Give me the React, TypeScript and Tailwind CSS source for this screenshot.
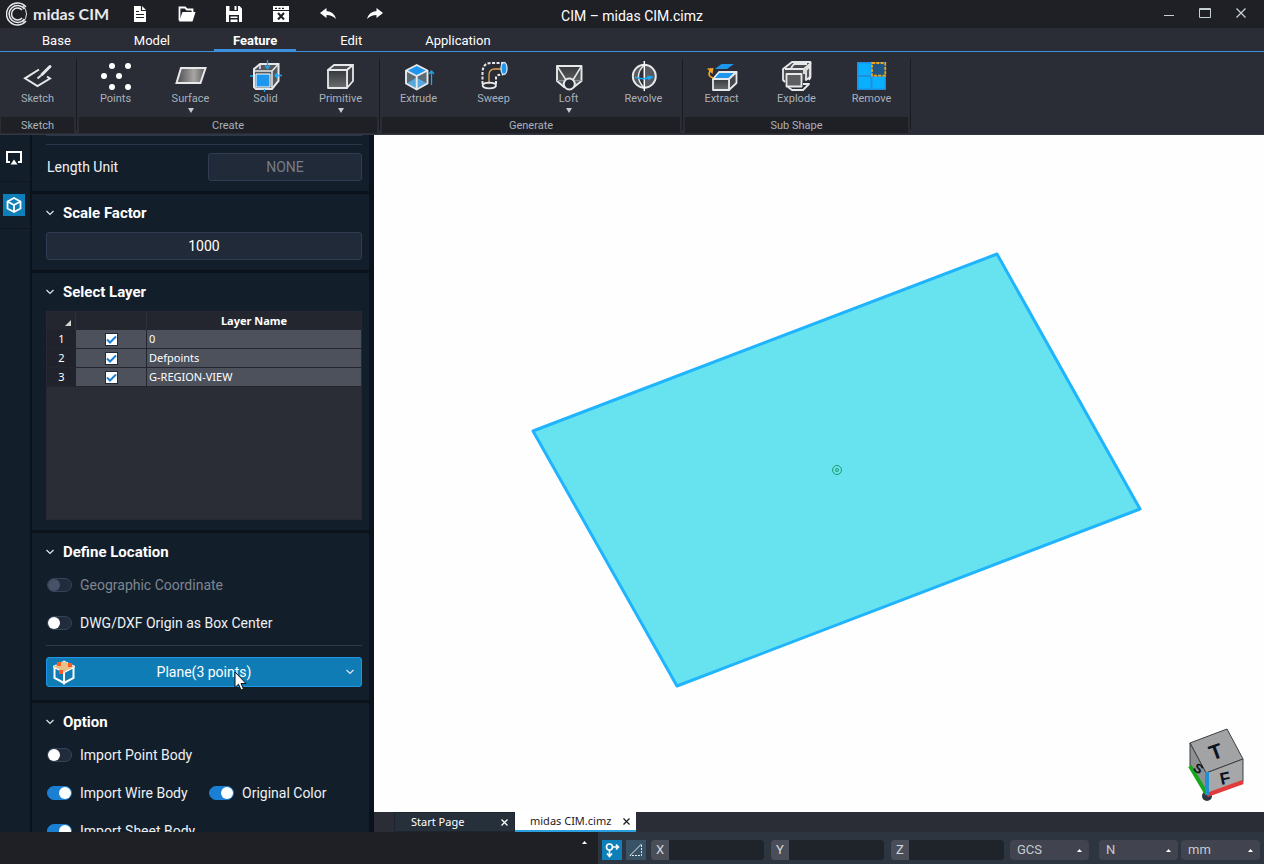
import React, { useState } from 'react'

interface ITool {
  label: string
  icon: React.ReactNode
  hasMenu?: boolean
}

interface IToolGroup {
  name: string
  tools: ITool[]
}

interface ILayer {
  id: number
  name: string
  visible: boolean
}

const LINE = '#e6e8ea'
const BLUE = '#1e96ee'

const SketchIcon = <g fill="none" stroke={LINE} strokeWidth="2">
  <path d="M17 9.5 3 18.3 15.5 26 28 18.5 25 16.5" />
  <path d="M20 14.5 28 6.5" strokeWidth="3" strokeLinecap="round" />
  <path d="M15.5 18.5 19 15.5" />
</g>

const PointsIcon = <g fill="#fff">
  <circle cx="12" cy="6" r="3" />
  <circle cx="28" cy="6" r="3" />
  <circle cx="4" cy="16" r="3" />
  <circle cx="19" cy="16" r="3" />
  <circle cx="12" cy="27" r="3" />
  <circle cx="28" cy="27" r="3" />
</g>

const SurfaceIcon = <path d="M6 8H30.5L25.5 23H1.5Z" fill="url(#metal)" stroke={LINE} strokeWidth="2" />

const SolidIcon = <g>
  <path d="M10 4H28.500V21L22 29H6L4 27V9Z" fill="#55585c" stroke={LINE} strokeWidth="2" />
  <path d="M5 11H22L28.500 4M22 11V28M10 4V9" fill="none" stroke={LINE} strokeWidth="1.500" />
  <path d="M6 14H20V27H6Z" fill={BLUE} stroke="#fff" />
  <path d="M17.500 0V8M15 5.500 17.500 8.500 20 5.500M32 15.500H25M27.500 13 25 15.500 27.500 18M0 16H3M14.500 29V32" fill="none" stroke="#18a8f5" strokeWidth="1.300" />
</g>

const PrimitiveIcon = <g stroke={LINE} strokeWidth="1.800" strokeLinejoin="round">
  <path d="M3 10 9 5H28L22 10Z" fill="#4c4e51" />
  <path d="M22 10 28 5V21L22 28Z" fill="#3c3e41" />
  <path d="M3 10H22V28H3Z" fill="url(#shade)" />
</g>

const ExtrudeIcon = <g strokeLinejoin="round">
  <path d="M13.700 5 24.500 10.500V23.500L13.700 29.500 3 23.500V10.500Z" fill="#5c6b76" />
  <path d="M13.700 17.500 24 23.500 13.700 29 3.500 23.500Z" fill="#57a8dc" />
  <path d="M13.700 5 24.500 10.500 13.700 16 3 10.500Z" fill={BLUE} />
  <path d="M13.700 5 24.500 10.500V23.500L13.700 29.500 3 23.500V10.500ZM3 10.500 13.700 16 24.500 10.500M13.700 16V29" fill="none" stroke={LINE} strokeWidth="1.900" />
  <path d="M28.500 25V11.500M26 14 28.500 11 31 14" fill="none" stroke="#18a8f5" strokeWidth="1.300" />
</g>

const SweepIcon = <g fill="none">
  <path d="M4.500 24V12Q5 3 13 3H25" stroke={LINE} strokeWidth="2" strokeDasharray="3 1.500" />
  <path d="M18 24V18Q18 14.500 25 14.500" stroke={LINE} strokeWidth="2" strokeDasharray="3 1.500" />
  <path d="M11 24V15Q11 9 17 9H25" stroke="#e0a64e" strokeWidth="1.300" />
  <ellipse cx="26" cy="8.500" rx="3" ry="6" fill={BLUE} stroke="#d7e9f6" strokeWidth="1.300" />
  <ellipse cx="11.300" cy="25.500" rx="6.700" ry="2.800" stroke={LINE} strokeWidth="1.800" />
</g>

const LoftIcon = <g stroke={LINE} strokeWidth="1.900" strokeLinejoin="round">
  <path d="M4 6H28.500V21L21 27H11L4 21Z" fill="url(#shade)" />
  <path d="M4 6 13 20M28.500 6 20 20" fill="none" strokeWidth="1.500" />
  <path d="M4 20.500H11M21 20.500H28.500" fill="none" stroke="#8a8d91" strokeWidth="1" />
  <circle cx="16.300" cy="24" r="5.500" fill="#2a2c36" />
</g>

const RevolveIcon = <g fill="none">
  <circle cx="16.300" cy="16.300" r="11.500" fill="#56595d" stroke={LINE} strokeWidth="1.900" />
  <path d="M16.300 5Q4.500 16 16.300 28" fill="#2e3036" stroke={LINE} strokeWidth="1.500" />
  <path d="M16.300 1V31" stroke="#fff" strokeWidth="1.500" />
  <path d="M7 17Q14 20 21 17.500" stroke="#18a8f5" strokeWidth="1.500" />
  <path d="M19 15.500 26 16.500 20.500 20.500Z" fill="#18a8f5" />
</g>

const ExtractIcon = <g strokeLinejoin="round">
  <path d="M15.500 4H28L21 9H9Z" fill={BLUE} />
  <path d="M7 19 13 12H30.500L23 19Z" fill={BLUE} stroke={LINE} strokeWidth="1.800" />
  <path d="M23 19 30.500 12V23L23 30Z" fill="#47494d" stroke={LINE} strokeWidth="1.800" />
  <path d="M7 19H23V30H7Z" fill="url(#shade)" stroke={LINE} strokeWidth="1.800" />
  <path d="M7 18Q1 16 4 11" fill="none" stroke="#f5a623" strokeWidth="1.700" />
  <path d="M1 8.500 7.500 8 6.500 14Z" fill="#f5a623" />
</g>

const ExplodeIcon = <g fill="none" stroke={LINE} strokeWidth="1.800" strokeLinejoin="round">
  <path d="M4 22 2 20V9L11 2H29.500V17L28 20" fill="#4a4c50" />
  <path d="M4 9H23L30 3M23 9V14M10 8 13 4H26" />
  <path d="M25 10 29 6V17L25 20Z" fill="#55585c" />
  <path d="M7 27 11 30H22L28 24H22" />
  <path d="M5.500 14H20.500V26.500H5.500Z" fill="#5c5e60" />
</g>

const RemoveIcon = <g>
  <path d="M1 2H30V30H1Z" fill="#1c8fe0" />
  <path d="M2.500 3.500H14.500V15H2.500ZM2.500 17H14.500V28.500H2.500ZM16.500 17H28.500V28.500H16.500Z" fill="#08b0ff" />
  <path d="M16 3H29.300V15.700H16Z" fill="#1f5683" stroke="#f2a414" strokeWidth="1.800" strokeDasharray="3 1.300" />
</g>

const toolGroups: IToolGroup[] = [
  { name: 'Sketch', tools: [{ label: 'Sketch', icon: SketchIcon }] },
  {
    name: 'Create',
    tools: [
      { label: 'Points', icon: PointsIcon },
      { label: 'Surface', icon: SurfaceIcon, hasMenu: true },
      { label: 'Solid', icon: SolidIcon },
      { label: 'Primitive', icon: PrimitiveIcon, hasMenu: true }
    ]
  },
  {
    name: 'Generate',
    tools: [
      { label: 'Extrude', icon: ExtrudeIcon },
      { label: 'Sweep', icon: SweepIcon },
      { label: 'Loft', icon: LoftIcon, hasMenu: true },
      { label: 'Revolve', icon: RevolveIcon }
    ]
  },
  {
    name: 'Sub Shape',
    tools: [
      { label: 'Extract', icon: ExtractIcon },
      { label: 'Explode', icon: ExplodeIcon },
      { label: 'Remove', icon: RemoveIcon }
    ]
  }
]

const quickActions: { label: string, icon: React.ReactNode }[] = [
  {
    label: 'New',
    icon: <>
      <path d="M4 2H12L16 6V18H4Z" fill="#fff" />
      <path d="M11.500 2V6.500H16M6 7.500H9M6 10.500H14M6 13.500H14" stroke="#1f2026" strokeWidth="1.200" fill="none" />
    </>
  },
  {
    label: 'Open',
    icon: <>
      <path d="M2.500 16.500V3.500H8L10 5.500H15.500V8" fill="none" stroke="#fff" strokeWidth="1.800" />
      <path d="M5.500 8H18.500L15.500 17.500H2Z" fill="#fff" />
    </>
  },
  {
    label: 'Save',
    icon: <>
      <path d="M2 2H15.500L18 4.500V18H2Z" fill="#fff" />
      <path d="M5.500 2H14V7H5.500ZM5 11H15V18H5Z" fill="#1f2026" />
      <path d="M10.500 2H12.500V6H10.500ZM6.500 12.500H13.500V14H6.500ZM6.500 15.500H13.500V18H6.500Z" fill="#fff" />
    </>
  },
  {
    label: 'Close project',
    icon: <>
      <path d="M2 2H18V18H2Z" fill="#fff" />
      <path d="M2 6.500H18M4 4.300H6M7.500 4.300H9.500M11 4.300H13" stroke="#1f2026" strokeWidth="1.200" />
      <path d="M7 9 13 15.500M13 9 7 15.500" stroke="#1f2026" strokeWidth="2" />
    </>
  },
  { label: 'Undo', icon: <path d="M2 9 8.500 4V7Q16 7.500 18 15 14 11 8.500 11V14Z" fill="#fff" /> },
  { label: 'Redo', icon: <path d="M18 9 11.500 4V7Q4 7.500 2 15 6 11 11.500 11V14Z" fill="#fff" /> }
]

const menuTabs = ['Base', 'Model', 'Feature', 'Edit', 'Application']

function TitleBar() {
  return <header className="h-7 shrink-0 grid grid-cols-[1fr_auto_1fr] bg-[#1f2026] text-white">
    <div className="flex items-center">
      <div className="w-[116px] pl-1.5 flex items-center gap-[5px]">
        <svg width="22" height="24" viewBox="0 0 22 24" fill="none" stroke="#e8eaec" aria-hidden="true">
          <path d="M20 5A11 11 0 1 0 20 19" strokeWidth="1.500" />
          <path d="M18.500 7A8.500 8.500 0 1 0 18.500 17" strokeWidth="1.500" />
          <path d="M16 8A6 6 0 1 0 16 16" strokeWidth="1.500" />
          <path d="M17 3.500Q24 12 17 20.500" strokeWidth="1" />
        </svg>
        <span className="font-['Lato',sans-serif] font-bold text-base leading-6 text-[#e8eaec] whitespace-nowrap">midas CIM</span>
      </div>
      {quickActions.map((action) => (
        <button key={action.label} aria-label={action.label} className="w-[47px] h-7 flex items-center justify-center">
          <svg width="20" height="20" viewBox="0 0 20 20">{action.icon}</svg>
        </button>
      ))}
    </div>
    <h1 className="pt-1 text-sm leading-6">CIM – midas CIM.cimz</h1>
    <div className="flex justify-end pr-[5px] text-[#c5d0d4]">
      <button aria-label="Minimize" className="w-9 h-7 flex items-center justify-center">
        <svg width="14" height="14" viewBox="0 0 14 14" stroke="currentColor"><path d="M2 8.500H12" /></svg>
      </button>
      <button aria-label="Maximize" className="w-9 h-7 flex items-center justify-center">
        <svg width="14" height="14" viewBox="0 0 14 14" stroke="currentColor" fill="none"><path d="M1.500 1.500H12.500V10.500H1.500ZM1.500 2.500H12.500" /></svg>
      </button>
      <button aria-label="Close" className="w-9 h-7 flex items-center justify-center">
        <svg width="14" height="14" viewBox="0 0 14 14" stroke="currentColor"><path d="M2.500 1.500 11.500 10.500M11.500 1.500 2.500 10.500" strokeWidth="1.300" /></svg>
      </button>
    </div>
  </header>
}

function MenuTabs() {
  const [active, setActive] = useState('Feature')

  return <nav className="h-6 shrink-0 flex gap-[25px] pl-[23px] bg-[#2a2c36] border-b border-[#3d8fe0]">
    {menuTabs.map((tab) => (
      <button
        key={tab}
        onClick={() => setActive(tab)}
        className={`px-[19px] pt-1 text-[13px] leading-4 text-white border-b-2 ${active === tab ? 'font-bold border-[#3d8fe0]' : 'border-transparent'}`}
      >
        {tab}
      </button>
    ))}
  </nav>
}

function Ribbon() {
  return <div className="h-[83px] shrink-0 flex bg-[#2a2c36] text-[11px] leading-3 text-[#a9b1ba] border-b border-[#343741]">
    {toolGroups.map((group) => (
      <React.Fragment key={group.name}>
        <section aria-label={group.name} className="px-px first:pl-0 flex flex-col">
          <div className="flex h-[65px] pt-2">
            {group.tools.map((tool) => (
              <button key={tool.label} className="w-[75px] flex flex-col items-center">
                <svg width="32" height="32" viewBox="0 0 32 32" aria-hidden="true">{tool.icon}</svg>
                <span className="mt-px">{tool.label}</span>
                {tool.hasMenu && <svg className="mt-[3px]" width="6" height="5" viewBox="0 0 6 5" fill="#c8cacc"><path d="M0 0H6L3 5Z" /></svg>}
              </button>
            ))}
          </div>
          <div className="h-4 mx-px bg-[#1f2026] text-center leading-[18px]">{group.name}</div>
        </section>
        <div className="w-px mt-[7px] mb-1 bg-[#1a1b21]" />
      </React.Fragment>
    ))}
  </div>
}

function SideRail() {
  return <div className="w-[30px] shrink-0 bg-[#131e2b] flex flex-col items-center">
    <button aria-label="Display" className="h-[47px] w-full flex items-center justify-center pr-0.5 border-b border-[#0e1620]">
      <svg width="18" height="18" viewBox="0 0 18 18"><path d="M5 13H2V3H16V13H13" fill="none" stroke="#fff" strokeWidth="2" /><path d="M9 10.500 12.500 15.500H5.500Z" fill="#fff" /></svg>
    </button>
    <div className="h-[47px] w-full flex items-center justify-center pr-0.5 border-b border-[#0e1620]">
      <button aria-label="Model" className="w-[22px] h-[22px] bg-[#0f7fb9] flex items-center justify-center">
        <svg width="18" height="18" viewBox="0 0 18 18" fill="none" stroke="#fff" strokeWidth="1.800" strokeLinejoin="round">
          <path d="M9 2 15.500 5.500V12.500L9 16 2.500 12.500V5.500ZM2.500 5.500 9 9 15.500 5.500M9 9V16" />
        </svg>
      </button>
    </div>
  </div>
}

function Chevron() {
  return <svg width="8" height="6" viewBox="0 0 8 6" fill="none" stroke="#e3e8ec" strokeWidth="1.200" aria-hidden="true">
    <path d="M0.500 1 4 4.500 7.500 1" />
  </svg>
}

function Section({ title, className, children }: { title: string, className?: string, children: React.ReactNode }) {
  return <section className={`border-t-3 border-[#0b121c] pl-3.5 pr-[7px] ${className ?? ''}`}>
    <h2 className="h-[38px]">
      <button className="h-full flex items-center gap-[9px] text-[15px] font-bold text-white">
        <Chevron />
        {title}
      </button>
    </h2>
    {children}
  </section>
}

function Toggle({ label, defaultChecked, disabled }: { label: string, defaultChecked?: boolean, disabled?: boolean }) {
  return <label className={`h-7 pl-px flex items-center gap-2 whitespace-nowrap ${disabled ? 'text-[#7d8690]' : 'text-[#eef1f4]'}`}>
    <input
      type="checkbox"
      role="switch"
      defaultChecked={defaultChecked}
      disabled={disabled}
      className="appearance-none w-[25px] h-3.5 rounded-full bg-[#222b3b] border border-[#364258] flex items-center before:block before:size-3 before:rounded-full before:bg-white checked:bg-[#1b80d3] checked:border-[#1b80d3] checked:justify-end disabled:before:bg-[#465267]"
    />
    {label}
  </label>
}

function LayerTable() {
  const [layers, setLayers] = useState<ILayer[]>([
    { id: 1, name: '0', visible: true },
    { id: 2, name: 'Defpoints', visible: true },
    { id: 3, name: 'G-REGION-VIEW', visible: true }
  ])

  const handleToggle = (id: number) => {
    setLayers(layers.map((layer) => layer.id === id ? { ...layer, visible: !layer.visible } : layer))
  }

  return <div className="h-[209px] bg-[#2b2d36] border border-[#262932] text-white text-[11px] leading-4 font-['Noto_Sans',sans-serif]">
    <table className="w-full table-fixed border-separate border-spacing-0">
      <colgroup>
        <col className="w-[29px]" />
        <col className="w-[71px]" />
        <col />
      </colgroup>
      <thead>
        <tr className="h-[18px] bg-[#23262f]">
          <th aria-label="Row" className="p-0 border-r border-[#2d3039]">
            <svg className="ml-auto mr-1 mt-1" width="6" height="6" viewBox="0 0 6 6" fill="#d4d6d2"><path d="M6 0V6H0Z" /></svg>
          </th>
          <th aria-label="Visible" className="p-0 border-r border-[#2d3039]" />
          <th className="p-0 font-bold">Layer Name</th>
        </tr>
      </thead>
      <tbody>
        {layers.map((layer) => (
          <tr key={layer.id} className="h-[19px] bg-[#4c515c]">
            <th scope="row" className="p-0 bg-[#20232c] border-b border-[#23262f] font-normal">{layer.id}</th>
            <td className="p-0 border-r border-b border-[#23262f]">
              <div className="grid place-items-center">
                <input
                  type="checkbox"
                  aria-label={`Show layer ${layer.name}`}
                  checked={layer.visible}
                  onChange={() => handleToggle(layer.id)}
                  className="peer col-start-1 row-start-1 appearance-none size-[13px] bg-white border border-[#222a38]"
                />
                <svg className="col-start-1 row-start-1 hidden peer-checked:block pointer-events-none" width="13" height="13" viewBox="0 0 13 13" fill="none" stroke="#1b7fd4" strokeWidth="2">
                  <path d="M2 6.500 5 9.500 11 3.500" />
                </svg>
              </div>
            </td>
            <td className="py-0 pr-0 pl-0.5 border-b border-[#23262f]">{layer.name}</td>
          </tr>
        ))}
      </tbody>
    </table>
  </div>
}

function PropertyPanel() {
  return <aside className="w-[344px] shrink-0 bg-[#0b121c] pl-0.5 pr-[5px] overflow-hidden text-sm leading-5 text-[#eef1f4]">
    <div className="bg-[#131e2b]">
      <div className="ml-3.5 mr-[7px] h-2.5 border-y border-[#29374a]" />
      <div className="pl-3.5 pr-[7px] pt-2 pb-2.5 flex justify-between">
        <label htmlFor="length-unit" className="pl-px leading-7">Length Unit</label>
        <input id="length-unit" disabled value="NONE" className="w-[154px] h-7 rounded-[3px] border border-[#2f3c52] bg-[#212a39] text-center text-[#767d87]" />
      </div>
      <Section title="Scale Factor" className="pb-2.5">
        <input aria-label="Scale Factor" defaultValue="1000" className="block w-full h-7 rounded-[3px] border border-[#2f3c52] bg-[#212a39] text-center text-white" />
      </Section>
      <Section title="Select Layer" className="pb-2.5">
        <LayerTable />
      </Section>
      <Section title="Define Location" className="pb-[13px]">
        <div className="flex flex-col gap-2.5">
          <Toggle label="Geographic Coordinate" disabled />
          <Toggle label="DWG/DXF Origin as Box Center" />
        </div>
        <hr className="mt-2 mb-[11px] border-[#2d3a4a]" />
        <div className="relative">
          <button aria-haspopup="listbox" className="w-full h-[30px] px-[5px] grid grid-cols-[24px_1fr_24px] items-center rounded-[3px] border border-[#2196e6] bg-[#0f7cb6] text-white">
            <svg width="24" height="26" viewBox="0 0 24 26" fill="none" aria-hidden="true">
              <path d="M2.500 8 12 13V24L2.500 19ZM21.500 8 12 13V24L21.500 19Z" stroke="#fff" strokeWidth="2" />
              <path d="M12 2 23 7.500 12 13.500 1 7.500Z" fill="#e8c08a" stroke="#fff" strokeWidth="1" strokeDasharray="2 1" />
              <path d="M5 3H9V7H5ZM16 4H20V8H16ZM7 11H11V15H7Z" fill="#ff5a1f" />
            </svg>
            <span>Plane(3 points)</span>
            <span className="justify-self-end pr-0.5"><Chevron /></span>
          </button>
          <svg className="absolute left-[188px] top-3.5 pointer-events-none" width="13" height="20" viewBox="0 0 13 20">
            <path d="M1 1V16.500L4.500 13.200 7 19 9.500 18 7 12.500H12Z" fill="#fff" stroke="#111" />
          </svg>
        </div>
      </Section>
      <Section title="Option">
        <div className="flex flex-col gap-2.5">
          <Toggle label="Import Point Body" />
          <div className="grid grid-cols-[162px_1fr]">
            <Toggle label="Import Wire Body" defaultChecked />
            <Toggle label="Original Color" defaultChecked />
          </div>
          <Toggle label="Import Sheet Body" defaultChecked />
        </div>
      </Section>
    </div>
  </aside>
}

function ViewCube() {
  return <svg className="absolute right-4 bottom-2" width="62" height="76" viewBox="0 0 62 76" fontFamily="Liberation Sans, sans-serif" fontWeight="bold" fill="#0b1220">
    <circle cx="21" cy="68" r="5" fill="#2f3643" />
    <g stroke="#3d3f42" strokeLinejoin="round">
      <path d="M4 15 41 1 57 31 20 45Z" fill="#a2a3a5" />
      <path d="M4 15 20 45V66L4 38Z" fill="#8f9092" />
      <path d="M20 45 57 31V54L20 67Z" fill="#a6a7a9" />
    </g>
    <path d="M4 38 20 65" stroke="#16a61c" strokeWidth="4" />
    <path d="M21 67 57 54" stroke="#e23b3b" strokeWidth="4" />
    <path d="M21 44V67" stroke="#1f8fd6" strokeWidth="4" />
    <text x="30" y="31" fontSize="21" textAnchor="middle" transform="rotate(-20 30 24)">T</text>
    <text x="39" y="56" fontSize="17" textAnchor="middle" transform="rotate(-12 39 50)">F</text>
    <text x="12" y="45" fontSize="13" textAnchor="middle" transform="rotate(35 12 41)">S</text>
  </svg>
}

function Workspace() {
  return <main className="grow min-w-0 flex flex-col bg-[#2a2c36]">
    <div className="grow min-h-0 relative bg-[#fefefe]">
      <svg className="block w-full h-full" viewBox="0 0 890 677" aria-label="Model view">
        <path d="M159 296 623 119 766 374 303 551Z" fill="#66e3ee" stroke="#1fb4fd" strokeWidth="3" strokeLinejoin="round" />
        <g fill="none" stroke="#1f9c6c">
          <circle cx="463" cy="335" r="4.500" />
          <circle cx="463" cy="335" r="1.500" />
        </g>
      </svg>
      <ViewCube />
    </div>
    <div className="h-5 shrink-0 flex pl-5 text-[11px] leading-5 font-['Noto_Sans',sans-serif]">
      <div className="w-[121px] flex justify-between pl-4 pr-1.5 bg-[#26303b] border border-[#1f252e] text-white">
        <button className="leading-[18px]">Start Page</button>
        <button aria-label="Close Start Page"><CloseMark /></button>
      </div>
      <div className="w-[121px] flex justify-between pl-[15px] pr-1.5 bg-white border-b-2 border-[#2a9fe0] text-[#1f2026]">
        <button className="leading-[18px]">midas CIM.cimz</button>
        <button aria-label="Close midas CIM.cimz"><CloseMark /></button>
      </div>
    </div>
  </main>
}

function CloseMark() {
  return <svg width="7" height="7" viewBox="0 0 7 7" fill="none" stroke="currentColor" strokeWidth="1.300"><path d="M0.500 0.500 6.500 6.500M6.500 0.500 0.500 6.500" /></svg>
}

function CoordinateField({ axis }: { axis: string }) {
  return <label className="flex h-5 rounded-sm overflow-hidden">
    <span className="w-[18px] bg-[#4a4e59] text-center">{axis}</span>
    <input className="w-[95px] bg-[#1e2429] px-1 text-white" />
  </label>
}

function UnitSelect({ label, options }: { label: string, options: string[] }) {
  return <div className="relative h-5">
    <select aria-label={label} className="appearance-none w-[79px] h-5 pl-[7px] rounded-sm bg-[#41444f] text-[#c3cbd3]">
      {options.map((option) => <option key={option}>{option}</option>)}
    </select>
    <svg className="absolute right-[7px] top-[9px] pointer-events-none" width="5" height="3" viewBox="0 0 5 3" fill="#fff"><path d="M2.500 0 5 3H0Z" /></svg>
  </div>
}

function StatusBar() {
  return <footer className="h-8 shrink-0 flex bg-[#1f2026] text-[13px] leading-5 text-[#d3d8dc]">
    <div className="grow flex justify-end pr-2.5">
      <button aria-label="Expand log" className="h-5 px-px">
        <svg width="5" height="3" viewBox="0 0 5 3" fill="#fff"><path d="M2.500 0 5 3H0Z" /></svg>
      </button>
    </div>
    <div className="flex items-center gap-[5px] pt-1 px-1 bg-[#2c3540]">
      <div className="flex gap-1">
        <button aria-label="Snap" className="size-5 bg-[#0f7fb9] flex items-center justify-center">
          <svg width="16" height="16" viewBox="0 0 16 16" fill="none" stroke="#fff" strokeWidth="1.600">
            <circle cx="5.500" cy="5" r="3" />
            <path d="M8.500 5H14M12 2.500 14.500 5 12 7.500M5.500 8V14M3 11.500 5.500 14.500 8 11.500" />
          </svg>
        </button>
        <button aria-label="Work plane" className="size-5 bg-[#3a5265] flex items-center justify-center">
          <svg width="16" height="16" viewBox="0 0 16 16" fill="none" stroke="#dfe8ee">
            <path d="M2 13.500 13.500 2" />
            <path d="M13.500 3V13.500H2" strokeDasharray="2 1" />
          </svg>
        </button>
      </div>
      <div className="flex gap-[7px] pr-px">
        <CoordinateField axis="X" />
        <CoordinateField axis="Y" />
        <CoordinateField axis="Z" />
      </div>
      <UnitSelect label="Coordinate system" options={['GCS', 'UCS']} />
      <div className="flex gap-[3px] pl-[5px]">
        <UnitSelect label="Force unit" options={['N', 'kN']} />
        <UnitSelect label="Length unit" options={['mm', 'm']} />
      </div>
    </div>
  </footer>
}

export default function App() {
  return <div className="h-screen flex flex-col overflow-hidden bg-[#1f2026] font-['Roboto',sans-serif]">
    {/* gradients shared by the ribbon icons */}
    <svg width="0" height="0" className="absolute" aria-hidden="true">
      <defs>
        <linearGradient id="metal">
          <stop offset="0" stopColor="#4a4a4c" />
          <stop offset="0.600" stopColor="#a8a6a4" />
          <stop offset="1" stopColor="#5a5a5c" />
        </linearGradient>
        <linearGradient id="shade" x2="0" y2="1">
          <stop offset="0" stopColor="#36383b" />
          <stop offset="1" stopColor="#6a6c6e" />
        </linearGradient>
      </defs>
    </svg>
    <TitleBar />
    <MenuTabs />
    <Ribbon />
    <div className="grow min-h-0 flex">
      <SideRail />
      <PropertyPanel />
      <Workspace />
    </div>
    <StatusBar />
  </div>
}
